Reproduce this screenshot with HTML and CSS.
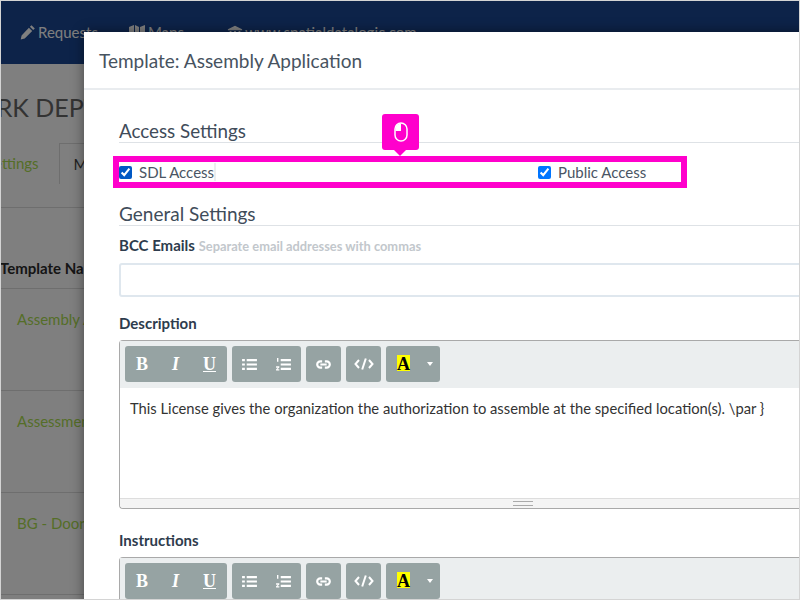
FILE: index.html
```html
<!DOCTYPE html>
<html lang="en">
<head>
<meta charset="utf-8">
<title>Template: Assembly Application</title>
<link rel="stylesheet" href="styles.css">
</head>
<body>
<div class="page">
  <nav class="navbar">
    <span class="nav-item"><svg class="nav-icon" viewBox="0 0 16 16"><path d="M11.500 1.200l3.300 3.300-1.600 1.600-3.300-3.300zM8.900 3.800l3.300 3.300-7.500 7.500-4 .9.9-4z"/></svg>Requests</span>
    <span class="nav-item nav-maps"><svg class="nav-icon nav-icon-wide" viewBox="0 0 16 16"><path d="M0 3l5-2v12l-5 2zM6 1l4 2v12l-4-2zM11 3l5-2v12l-5 2z"/></svg>Maps</span>
    <span class="nav-item nav-site"><svg class="nav-icon" viewBox="0 0 18 16"><path d="M9 1l8 4v1H1V5zM3 7h2v5H3zM8 7h2v5H8zM13 7h2v5h-2zM1 13h16v2H1z"/></svg>www.spatialdatalogic.com</span>
  </nav>
  <main class="behind">
    <h1 class="dept">PARK DEPT</h1>
    <div class="tabs"><span class="tab">Settings</span><span class="tab tab-active">Mail</span></div>
    <div class="th">Template Name</div>
    <div class="row">Assembly Application</div>
    <div class="row">Assessment</div>
    <div class="row">BG - Door</div>
  </main>
</div>
<div class="backdrop"></div>
<section class="modal">
  <header class="modal-head">Template: Assembly Application</header>
  <div class="modal-body">
    <h2 class="section-title first">Access Settings</h2>
    <div class="access-row">
      <label class="check check-sdl"><input type="checkbox" class="cb cb-dark" checked><span class="check-text">SDL Access</span></label>
      <label class="check check-public"><input type="checkbox" class="cb" checked><span>Public Access</span></label>
    </div>
    <h2 class="section-title second">General Settings</h2>
    <div class="field-label bcc"><b>BCC Emails</b> <small>Separate email addresses with commas</small></div>
    <div class="input"></div>
    <div class="field-label desc"><b>Description</b></div>
    <div class="editor">
      <div class="toolbar">
        <div class="group g-style"><span class="glyph g-b">B</span><span class="glyph g-i">I</span><span class="glyph g-u">U</span></div>
        <div class="group g-list">
          <svg class="ti" viewBox="0 0 16 14"><path d="M0 1h3v2.400H0zM5 1h11v2.400H5zM0 5.800h3v2.400H0zM5 5.800h11v2.400H5zM0 10.600h3V13H0zM5 10.600h11V13H5z"/></svg>
          <svg class="ti" viewBox="0 0 16 14"><path d="M1 0h1.500v4H1zM5 1h11v2.400H5zM5 5.800h11v2.400H5zM5 10.600h11V13H5zM0 9h3.500v1.200L1.500 12h2v1.400H0v-1.200L2 10.400H0z"/></svg>
        </div>
        <div class="group g-one"><svg class="ti ti-link" viewBox="0 0 16 10"><path fill="none" stroke="#fff" stroke-width="2.400" d="M6.500 1.500H4.500a3.500 3.500 0 0 0 0 7h2M9.500 1.500h2a3.500 3.500 0 0 1 0 7h-2M4.500 5h7"/></svg></div>
        <div class="group g-one"><svg class="ti ti-code" viewBox="0 0 20 12"><path fill="none" stroke="#fff" stroke-width="2" d="M5 2L1.500 6 5 10M15 2l3.500 4L15 10M11.800 .5L8.200 11.500"/></svg></div>
        <div class="group g-color"><span class="swatch">A</span><span class="caret"></span></div>
      </div>
      <div class="editor-text">This License gives the organization the authorization to assemble at the specified location(s). \par }</div>
      <div class="statusbar"><span class="grip"></span></div>
    </div>
    <div class="field-label instr"><b>Instructions</b></div>
    <div class="editor">
      <div class="toolbar">
        <div class="group g-style"><span class="glyph g-b">B</span><span class="glyph g-i">I</span><span class="glyph g-u">U</span></div>
        <div class="group g-list">
          <svg class="ti" viewBox="0 0 16 14"><path d="M0 1h3v2.400H0zM5 1h11v2.400H5zM0 5.800h3v2.400H0zM5 5.800h11v2.400H5zM0 10.600h3V13H0zM5 10.600h11V13H5z"/></svg>
          <svg class="ti" viewBox="0 0 16 14"><path d="M1 0h1.500v4H1zM5 1h11v2.400H5zM5 5.800h11v2.400H5zM5 10.600h11V13H5zM0 9h3.500v1.200L1.500 12h2v1.400H0v-1.200L2 10.400H0z"/></svg>
        </div>
        <div class="group g-one"><svg class="ti ti-link" viewBox="0 0 16 10"><path fill="none" stroke="#fff" stroke-width="2.400" d="M6.500 1.500H4.500a3.500 3.500 0 0 0 0 7h2M9.500 1.500h2a3.500 3.500 0 0 1 0 7h-2M4.500 5h7"/></svg></div>
        <div class="group g-one"><svg class="ti ti-code" viewBox="0 0 20 12"><path fill="none" stroke="#fff" stroke-width="2" d="M5 2L1.500 6 5 10M15 2l3.500 4L15 10M11.800 .5L8.200 11.500"/></svg></div>
        <div class="group g-color"><span class="swatch">A</span><span class="caret"></span></div>
      </div>
    </div>
  </div>
</section>
<div class="highlight"></div>
<div class="pin">
  <svg class="pin-icon" viewBox="0 0 14 20"><rect x="1" y="1" width="12" height="18" rx="6" fill="none" stroke="#fff" stroke-width="1.500"/><path d="M7 1.500A5.500 5.500 0 0 0 1.500 7v2H7z" fill="#fff"/></svg>
</div>
<div class="frame"></div>
</body>
</html>
```
FILE: styles.css
```css
* { box-sizing: border-box; }
html, body { margin: 0; height: 100%; }
body {
  position: relative;
  width: 800px;
  height: 600px;
  overflow: hidden;
  background: #fff;
  font-family: Lato, "Liberation Sans", sans-serif;
  color: #3b4757;
}
.page { height: 600px; overflow: hidden; }
.navbar {
  display: flex;
  align-items: center;
  height: 64px;
  padding-left: 20px;
  background: #1a4692;
  color: #fff;
  font-size: 15px;
}
.nav-item { display: flex; align-items: center; gap: 2px; }
.nav-maps { margin-left: 30px; }
.nav-site { margin-left: 43px; }
.nav-icon { width: 16px; height: 16px; fill: #fff; }
.nav-icon-wide { width: 18px; }
.behind { width: 100px; height: 536px; padding-top: 28px; overflow: hidden; }
.dept { margin: 0 0 0 -34px; font-size: 25px; font-weight: 400; line-height: 30px; white-space: nowrap; color: #666; }
.tabs { display: flex; align-items: flex-start; height: 65px; margin-top: 21px; border-bottom: 1px solid #ddd; }
.tab { padding: 11px 20px 0 0; margin-left: -14px; font-size: 15px; color: #aadc50; }
.tab-active {
  margin-left: 0; padding: 11px 0 0 14px; width: 60px; height: 41px; flex: none;
  color: #444; background: #fff; border: 1px solid #ddd; border-bottom: 0;
}
.th { height: 30px; margin-top: 51px; font-size: 15px; font-weight: 700; color: #2b2b2b; line-height: 18px; border-bottom: 1px solid #ddd; white-space: nowrap; }
.row { height: 102px; padding: 21px 0 0 17px; font-size: 15px; line-height: 18px; color: #aadc50; border-bottom: 1px solid #ddd; white-space: nowrap; }
.backdrop { position: absolute; inset: 0; background: rgba(0, 0, 0, .5); }
.modal {
  position: absolute;
  left: 84px;
  top: 32px;
  width: 900px;
  height: 700px;
  background: #fff;
  box-shadow: 0 0 12px rgba(0, 0, 0, .45);
}
.modal-head {
  height: 58px;
  padding: 17px 15px 0;
  font-size: 19px;
  line-height: 24px;
  color: #47535f;
  border-bottom: 2px solid #e9ecef;
}
.modal-body { padding: 0 20px 0 35px; }
.section-title {
  margin: 0;
  height: 25px;
  font-size: 18.800px;
  font-weight: 400;
  line-height: 26px;
  color: #3f4c5a;
  border-bottom: 1px solid #dee2e6;
}
.section-title.first { margin-top: 28px; }
.section-title.second { margin-top: 14px; font-size: 19px; }
.access-row { display: flex; height: 31px; margin-top: 13px; padding-top: 1px; font-size: 15px; color: #4a5564; }
.check { display: flex; align-items: center; gap: 7px; height: 30px; }
.check-sdl { width: 419px; }
.check-text { box-shadow: 2px 0 0 #eceeef; }
.cb { width: 13px; height: 13px; margin: 0; accent-color: #0075ff; }
.cb-dark { accent-color: #0058c4; }
.field-label { font-size: 15px; line-height: 18px; color: #2e3c4d; }
.field-label b { font-weight: 700; }
.field-label small { font-size: 12.850px; font-weight: 700; color: #c2c7cc; }
.bcc { margin-top: 10px; }
.input { height: 34px; margin-top: 8px; border: 2px solid #dfe7ee; border-radius: 3px; }
.desc { margin-top: 17px; margin-bottom: 8px; }
.instr { margin-top: 22px; margin-bottom: 8px; }
.editor {
  height: 169px;
  border: 1px solid #a9a9a9;
  border-right: 0;
  border-radius: 4px 0 0 4px;
  display: flex;
  flex-direction: column;
}
.toolbar {
  display: flex;
  gap: 5px;
  height: 47px;
  padding: 5px 5px 0;
  background: #ebeeef;
}
.group {
  display: flex;
  align-items: center;
  height: 36px;
  background: #96a3a3;
  border-radius: 3px;
  color: #fff;
}
.g-style { width: 102px; justify-content: space-between; padding: 0 12px 0 11px; }
.g-list { width: 69px; justify-content: space-between; padding: 0 10px; }
.g-one { width: 35px; justify-content: center; }
.g-color { width: 54px; padding-left: 11px; }
.glyph { font-family: "Liberation Serif", serif; font-size: 18px; font-weight: 700; width: 12px; text-align: center; }
.g-i { font-style: italic; }
.g-u { text-decoration: underline; }
.ti { width: 15px; height: 13px; fill: #fff; }
.ti-link { width: 17px; height: 9px; }
.ti-code { width: 20px; height: 12px; }
.swatch {
  width: 13px;
  height: 16px;
  margin-top: -2px;
  background: #ff0;
  color: #000;
  font-family: "Liberation Serif", serif;
  font-size: 18px;
  font-weight: 700;
  line-height: 18px;
  text-align: center;
}
.caret {
  margin-left: 17px;
  border: 3.500px solid transparent;
  border-top: 4px solid #fff;
  border-bottom: 0;
}
.editor-text { flex: 1; padding: 10px; font-size: 14.750px; line-height: 20px; color: #333; white-space: nowrap; }
.statusbar {
  display: flex;
  align-items: center;
  height: 10px;
  padding-left: 393px;
  background: #f4f4f4;
  border-top: 1px solid #ddd;
  border-radius: 0 0 0 4px;
}
.grip { width: 20px; height: 5px; border-top: 1px solid #aaa; border-bottom: 1px solid #aaa; }
.highlight {
  position: absolute;
  left: 113px;
  top: 156px;
  width: 574px;
  height: 32px;
  border: 6px solid #ff00cc;
}
.pin {
  position: absolute;
  left: 382px;
  top: 114px;
  width: 37px;
  height: 36px;
  display: flex;
  align-items: center;
  justify-content: center;
  background: #ff00cc;
  border-radius: 3px;
}
.pin::after {
  content: "";
  position: absolute;
  left: 12px;
  top: 36px;
  border: 6px solid transparent;
  border-top-color: #ff00cc;
  border-bottom: 0;
}
.pin-icon { width: 14px; height: 20px; }
.frame { position: absolute; inset: 0; border: 1px solid #d4d4d4; pointer-events: none; }
```
